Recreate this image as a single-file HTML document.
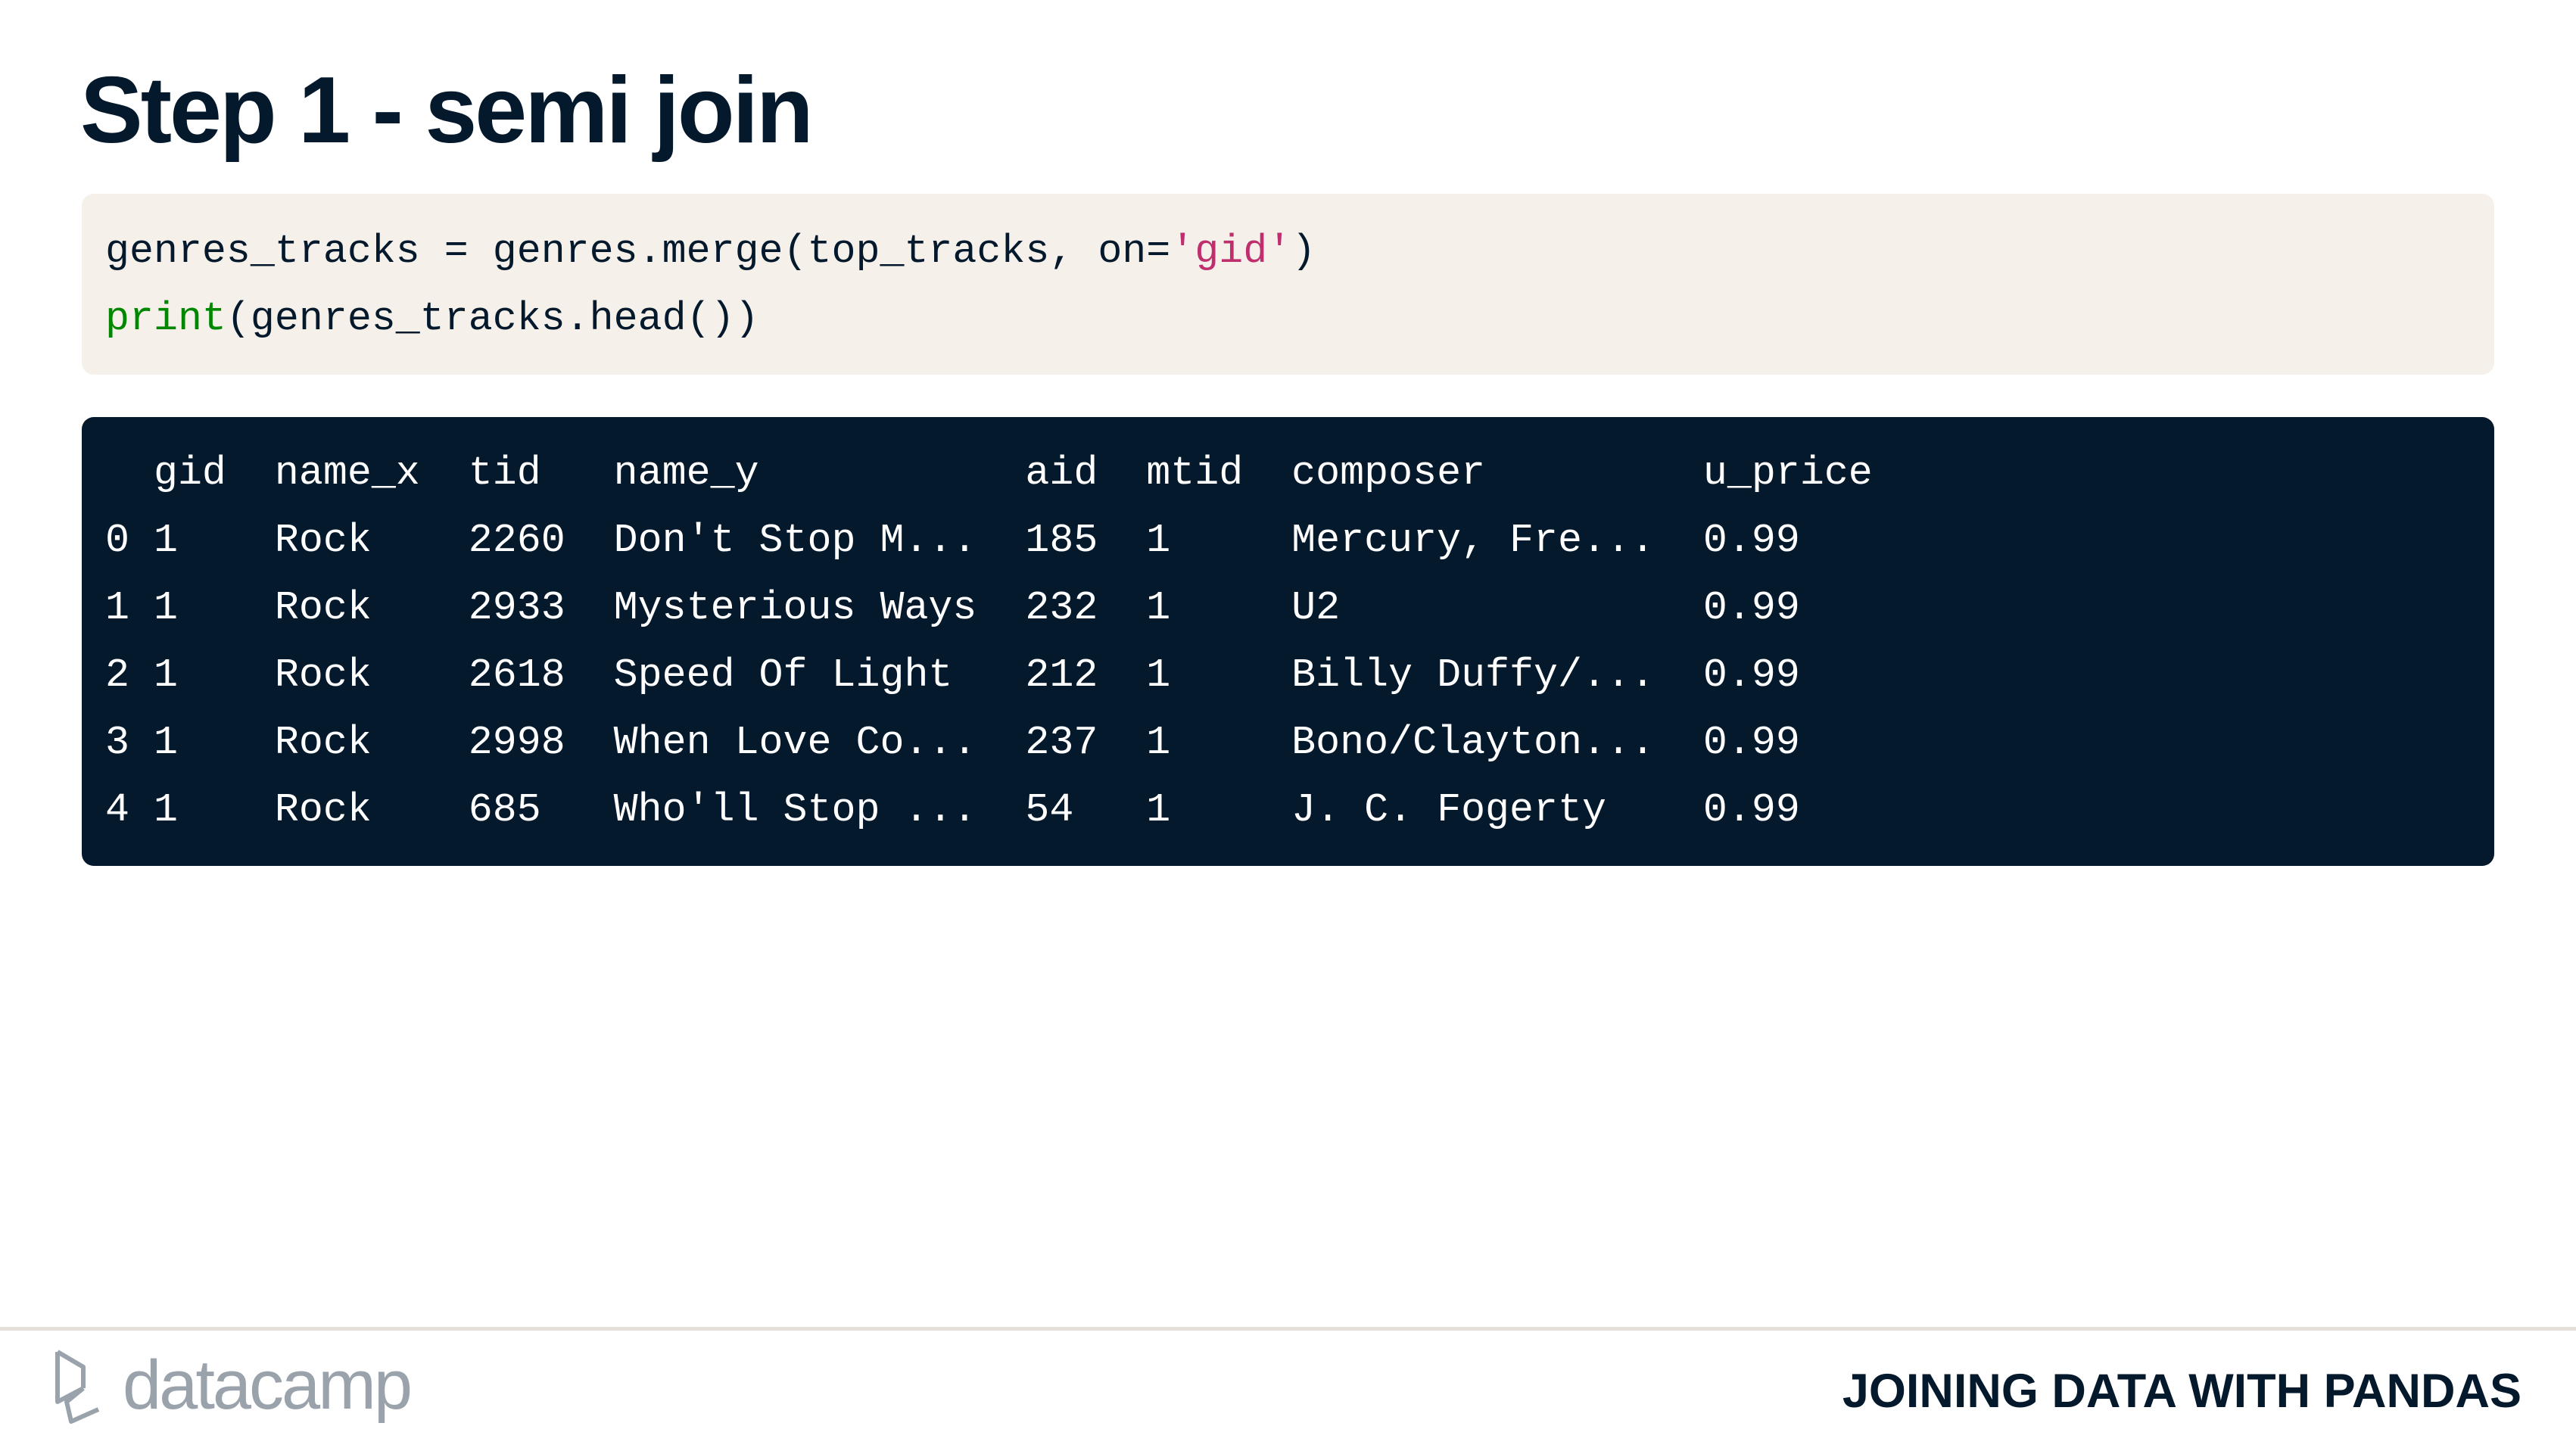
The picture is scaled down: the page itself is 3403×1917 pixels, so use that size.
<!DOCTYPE html>
<html><head><meta charset="utf-8"><style>
body{margin:0;width:3403px;height:1917px;background:#fff;position:relative;overflow:hidden;font-family:"Liberation Sans",sans-serif}
h1{position:absolute;left:106px;top:66px;margin:0;font-size:124px;font-weight:bold;color:#05192d;letter-spacing:-3px;line-height:160px}
.code{position:absolute;left:108px;top:256px;width:3187px;height:239px;background:#f5f1ea;border-radius:16px}
pre{margin:0;font-family:"Liberation Mono",monospace;font-size:53.3px;line-height:89px}
.out{position:absolute;left:108px;top:551px;width:3187px;height:593px;background:#05192d;border-radius:16px}
.out pre{position:absolute;left:31px;top:31px;color:#fff}
.hr{position:absolute;left:0;top:1753px;width:3403px;height:5px;background:#e5e1da}
.logo{position:absolute;left:162px;top:1778px;font-size:92px;color:#9aa3ab;letter-spacing:-3px}
.course{position:absolute;right:72px;top:1802px;font-size:63px;font-weight:bold;color:#05192d}
</style></head><body>
<h1>Step 1 - semi join</h1>
<div class="code"></div>
<pre style="position:absolute;left:139px;top:289px;color:#05192d">genres_tracks = genres.merge(top_tracks, on=<span style="color:#bf2e6d">'gid'</span>)
<span style="color:#008700">print</span>(genres_tracks.head())</pre>
<div class="out"><pre>  gid  name_x  tid   name_y           aid  mtid  composer         u_price
0 1    Rock    2260  Don't Stop M...  185  1     Mercury, Fre...  0.99
1 1    Rock    2933  Mysterious Ways  232  1     U2               0.99
2 1    Rock    2618  Speed Of Light   212  1     Billy Duffy/...  0.99
3 1    Rock    2998  When Love Co...  237  1     Bono/Clayton...  0.99
4 1    Rock    685   Who'll Stop ...  54   1     J. C. Fogerty    0.99</pre></div>
<div class="hr"></div>
<svg style="position:absolute;left:70px;top:1782px" width="80" height="100" viewBox="0 0 80 100"><path d="M6 4 L6 70 L40 52 M6 4 L40 24 L40 52 M40 52 L18 70 L24 96 L60 80" fill="none" stroke="#9aa3ab" stroke-width="6" stroke-linejoin="round"/></svg>
<div class="logo">datacamp</div>
<div class="course">JOINING DATA WITH PANDAS</div>
</body></html>
